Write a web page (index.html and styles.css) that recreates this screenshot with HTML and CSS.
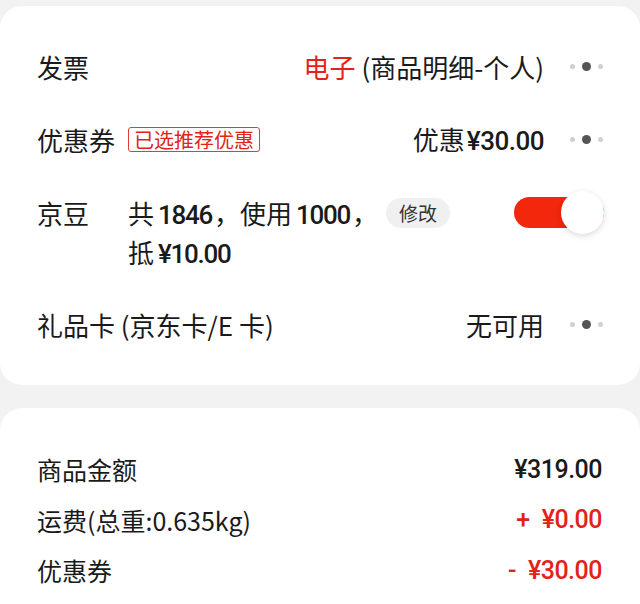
FILE: index.html
```html
<!DOCTYPE html>
<html lang="zh-CN">
<head>
  <meta charset="UTF-8">
  <meta name="viewport" content="width=device-width, initial-scale=1.0">
  <title>结算</title>
  <link rel="stylesheet" href="styles.css">
</head>
<body>

<div class="page">
  <div class="card card-options">
    <div class="row">
      <span class="label">发票</span>
      <span class="value"><span class="red">电子</span> (商品明细-个人)</span>
      <span class="more"><i></i><i class="big"></i><i></i></span>
    </div>

    <div class="row">
      <span class="label">优惠券</span>
      <span class="tag">已选推荐优惠</span>
      <span class="value">优惠<span class="num">¥30.00</span></span>
      <span class="more"><i></i><i class="big"></i><i></i></span>
    </div>

    <div class="row row-top">
      <span class="label label-beans">京豆</span>
      <div class="beans-text">
        <span class="line">共<span class="num">1846</span>，使用<span class="num">1000</span>，</span>
        <span class="line">抵<span class="num">¥10.00</span></span>
      </div>
      <button type="button" class="edit-btn">修改</button>
      <span class="switch on"><span class="knob"></span></span>
    </div>

    <div class="row">
      <span class="label">礼品卡 (京东卡/E 卡)</span>
      <span class="value">无可用</span>
      <span class="more"><i></i><i class="big"></i><i></i></span>
    </div>
  </div>

  <div class="card card-summary">
    <div class="sum-row">
      <span>商品金额</span>
      <span class="num">¥319.00</span>
    </div>
    <div class="sum-row">
      <span>运费(总重:0.635kg)</span>
      <span class="num red"><span class="sign">+</span>¥0.00</span>
    </div>
    <div class="sum-row">
      <span>优惠券</span>
      <span class="num red"><span class="sign">-</span>¥30.00</span>
    </div>
  </div>
</div>

</body>
</html>
```

FILE: styles.css
```css
body {
  margin: 0;
  background-color: #f2f2f2;
  font-family: "Noto Sans CJK SC", "Noto Sans", sans-serif;
  color: #1a1a1a;
  overflow: hidden;
}

.page {
  padding-top: 6px;
}

.card {
  background: #fff;
  border-radius: 22px;
}

.card-options {
  padding: 24px 36px 24px 37px;
}

.card-summary {
  margin-top: 23px;
  padding: 36px 37px 60px 37px;
}

.red {
  color: #e2231a;
}

.num {
  font-family: Roboto, "Noto Sans", sans-serif;
  font-weight: 500;
}

.row {
  display: flex;
  align-items: center;
  padding: 17px 0;
  font-size: 26px;
  line-height: 39px;
  height: 39px;
}

.row-top {
  align-items: flex-start;
  height: auto;
}

.label {
  flex-shrink: 0;
}

.label-beans {
  width: 91px;
}

.value {
  margin-left: auto;
}

.value .num {
  margin-left: 2px;
  letter-spacing: -0.5px;
}

.more {
  display: flex;
  align-items: center;
  gap: 7px;
  margin-left: 26px;
  width: 34px;
}

.more i {
  display: block;
  width: 5px;
  height: 5px;
  border-radius: 50%;
  background: #d0d0d0;
}

.more i.big {
  width: 9px;
  height: 9px;
  background: #555;
}

.tag {
  margin-left: 13px;
  padding: 0 5px;
  border: 1px solid #e23b33;
  border-radius: 3px;
  color: #e2231a;
  font-size: 20px;
  line-height: 23px;
}

.beans-text {
  display: flex;
  flex-direction: column;
  width: 258px;
}

.beans-text .line {
  display: block;
  height: 39px;
}

.beans-text .num {
  margin: 0 2px 0 4px;
  letter-spacing: -1.3px;
}

.edit-btn {
  margin-top: 5px;
  padding: 0 13px;
  height: 30px;
  border: none;
  border-radius: 15px;
  background: #f0f0f0;
  color: #333;
  font-family: inherit;
  font-size: 19px;
  line-height: 30px;
}

.switch {
  position: relative;
  margin: 4px 0 0 auto;
  width: 90px;
  height: 31px;
  border-radius: 16px;
  background: #f2270c;
}

.switch .knob {
  position: absolute;
  right: 0;
  top: -6px;
  width: 43px;
  height: 43px;
  border-radius: 50%;
  background: #fff;
  box-shadow: 0 2px 6px rgba(0, 0, 0, 0.15);
}

.sum-row {
  display: flex;
  justify-content: space-between;
  align-items: center;
  height: 50.5px;
  font-size: 25px;
}

.sum-row .num {
  padding-right: 1px;
  letter-spacing: -0.5px;
}

.sum-row .sign {
  margin-right: 12px;
}
```
